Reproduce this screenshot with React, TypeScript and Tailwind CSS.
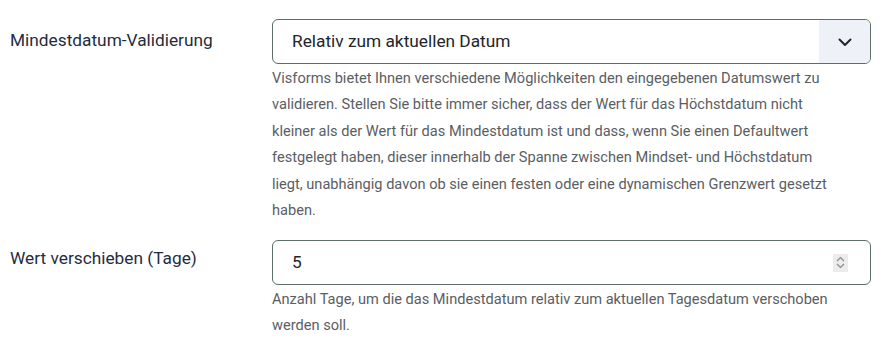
import React from "react";

const font = { fontFamily: "Roboto, 'Noto Sans', sans-serif" };

export default function App() {
  return (
    <div className="w-[894px] h-[344px] bg-white overflow-hidden" style={font}>
      <div className="flex flex-col pt-[19px]">
        <div className="flex">
          <div className="w-[272px] pl-[10px] pt-[9px] text-[17.3px] leading-[24px] text-[#1f2d3d] whitespace-nowrap">
            Mindestdatum-Validierung
          </div>
          <div className="w-[599px]">
            <div className="flex h-[45px] rounded-[6px] border border-[#5d6e67] overflow-hidden">
              <div className="flex-1 flex items-center pl-[19px] text-[17.3px] text-[#22262a]">
                Relativ zum aktuellen Datum
              </div>
              <div className="w-[51px] bg-[#eef2f8] flex items-center justify-center">
                <svg width="16" height="16" viewBox="0 0 16 16" fill="none">
                  <path d="M2.5 5.5L8 11l5.5-5.5" stroke="#22262a" strokeWidth="2" strokeLinecap="round" strokeLinejoin="round" />
                </svg>
              </div>
            </div>
            <p className="mt-[1px] text-[14.6px] leading-[26.4px] text-[#5a5e63] whitespace-nowrap">
              Visforms bietet Ihnen verschiedene Möglichkeiten den eingegebenen Datumswert zu
              <br />
              validieren. Stellen Sie bitte immer sicher, dass der Wert für das Höchstdatum nicht
              <br />
              kleiner als der Wert für das Mindestdatum ist und dass, wenn Sie einen Defaultwert
              <br />
              festgelegt haben, dieser innerhalb der Spanne zwischen Mindset- und Höchstdatum
              <br />
              liegt, unabhängig davon ob sie einen festen oder eine dynamischen Grenzwert gesetzt
              <br />
              haben.
            </p>
          </div>
        </div>
        <div className="flex mt-[17px]">
          <div className="w-[272px] pl-[10px] pt-[6px] text-[17.3px] leading-[24px] text-[#1f2d3d] whitespace-nowrap">
            Wert verschieben (Tage)
          </div>
          <div className="w-[599px]">
            <div className="flex h-[45px] rounded-[6px] border border-[#5d6e67] items-center">
              <div className="flex-1 pl-[19px] text-[17.3px] text-[#22262a]">5</div>
              <div className="mr-[22px] w-[15px] h-[18px] bg-[#ececec] flex flex-col items-center justify-center gap-[1px]">
                <svg width="9" height="6" viewBox="0 0 9 6" fill="none">
                  <path d="M1 5L4.5 1.5L8 5" stroke="#8a8a8a" strokeWidth="1.2" />
                </svg>
                <svg width="9" height="6" viewBox="0 0 9 6" fill="none">
                  <path d="M1 1L4.5 4.5L8 1" stroke="#8a8a8a" strokeWidth="1.2" />
                </svg>
              </div>
            </div>
            <p className="mt-[2px] text-[14.6px] leading-[25.5px] text-[#5a5e63] whitespace-nowrap">
              Anzahl Tage, um die das Mindestdatum relativ zum aktuellen Tagesdatum verschoben
              <br />
              werden soll.
            </p>
          </div>
        </div>
      </div>
    </div>
  );
}
